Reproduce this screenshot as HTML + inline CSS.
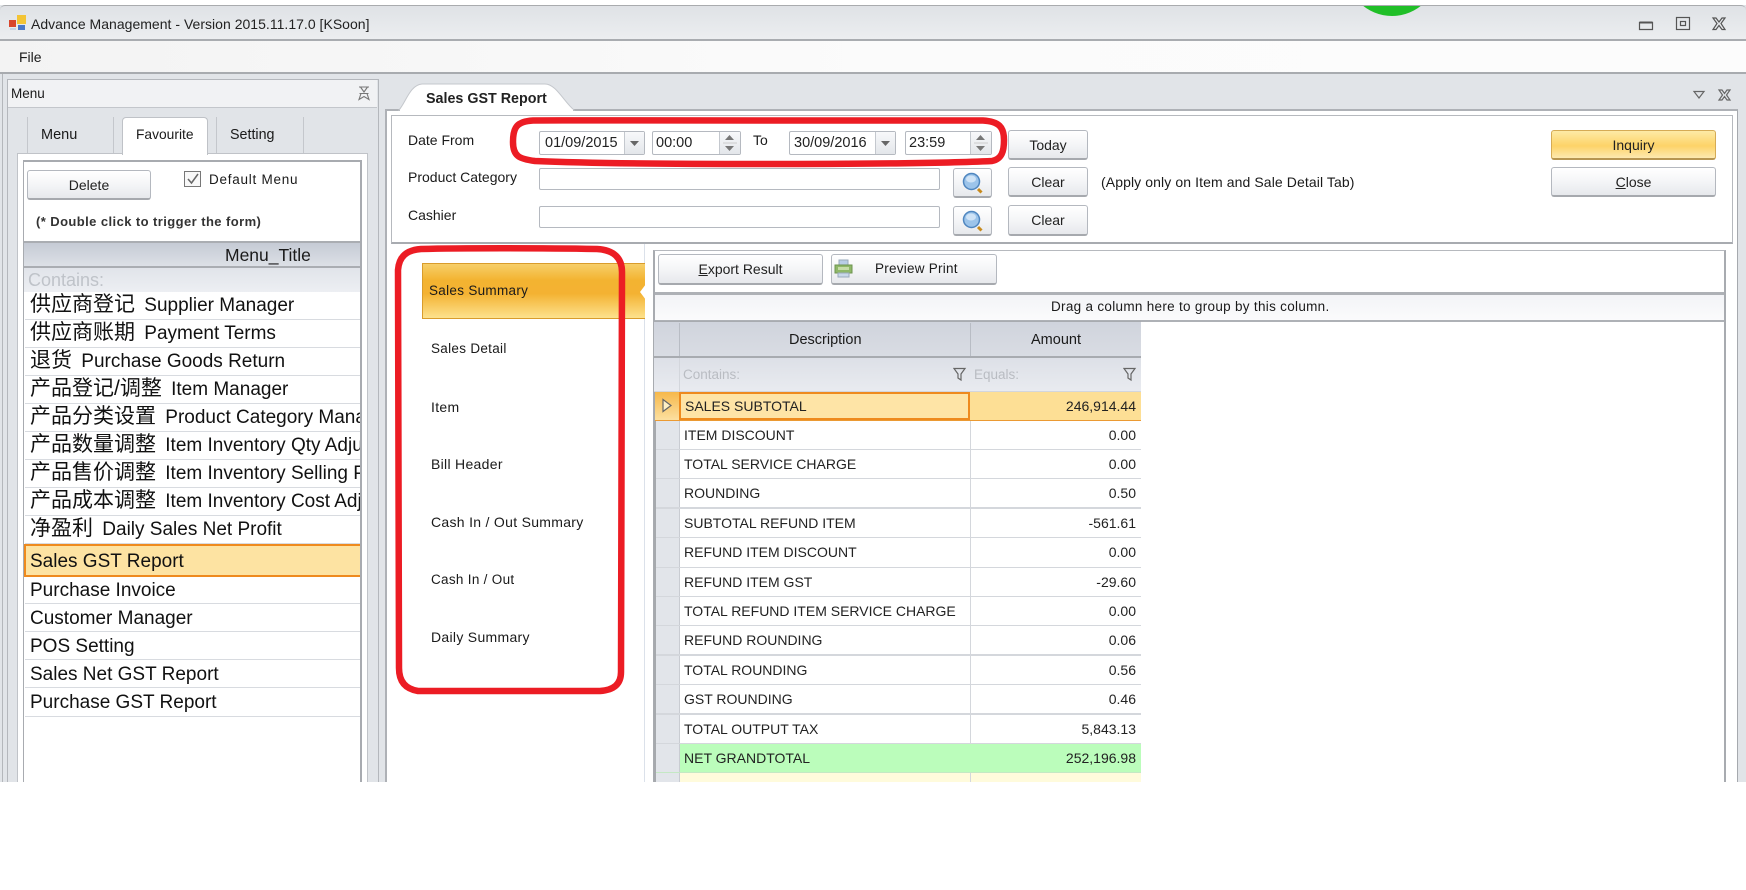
<!DOCTYPE html>
<html><head><meta charset="utf-8"><style>
html,body{margin:0;padding:0;background:#fff}
#p{position:relative;width:1746px;height:890px;overflow:hidden;background:#fff;font-family:"Liberation Sans","Noto Sans CJK SC",sans-serif;color:#1a1a1a;filter:blur(.3px)}
#p div,#p span.a,#p svg{position:absolute}
.t{position:absolute;white-space:nowrap;font-size:14px;line-height:16px}
.tb{font-size:14px;letter-spacing:.3px}
.btn{background:linear-gradient(#fff,#f3f4f6 55%,#e6e8ec);border:1px solid #b4b8bf;border-bottom:2px solid #a6a9ae;border-radius:3px;box-sizing:border-box;text-align:center;font-size:14px;color:#222}
.in{background:#fff;border:1px solid #b5b9c0;border-radius:2px;box-sizing:border-box}
.sp{background:linear-gradient(#f7f8fa,#e3e6ea);border-left:1px solid #c4c8ce;box-sizing:border-box}
.r{position:absolute;left:25px;width:335px;white-space:nowrap;overflow:hidden;font-size:19px;border-bottom:1px solid #d8dbe0;box-sizing:border-box;padding-left:5px;color:#111;background:#fff}
.r b{font-weight:400;font-size:21px;margin-right:4px}
.g{position:absolute;left:656px;width:485px;box-sizing:border-box;border-bottom:1px solid #d4d7dc;background:#fff;font-size:14px;color:#222}
.g i{position:absolute;left:0;top:0;bottom:0;width:23px;background:#e2e5ea;border-right:1px solid #c9ccd2;font-style:normal}
.g u{position:absolute;left:28px;text-decoration:none;white-space:nowrap}
.g s{position:absolute;right:5px;text-decoration:none;white-space:nowrap}
.g em{position:absolute;left:314px;top:0;bottom:0;width:1px;background:#d4d7dc}
</style></head><body><div id="p">

<!-- app background -->
<div style="left:0;top:5px;width:1746px;height:777px;background:#e1e4e8"></div>
<div style="left:2px;top:74px;width:1px;height:708px;background:#b4b7bb"></div>
<!-- title bar -->
<div style="left:0;top:5px;width:1746px;height:36px;background:linear-gradient(#dfe2e6,#eceef0);border-top:1px solid #a9abae;border-bottom:2px solid #a9acb0;box-sizing:border-box;border-radius:5px 5px 0 0;overflow:hidden">
 <div style="left:1346px;top:-82px;width:92px;height:92px;border-radius:50%;background:#20bf28"></div>
</div>
<svg style="left:9px;top:14px" width="18" height="17" viewBox="0 0 18 17"><rect x="0" y="6" width="7" height="7" fill="#d8452c"/><rect x="8" y="1" width="9" height="9" fill="#f3c435"/><rect x="9" y="11" width="7" height="5" fill="#4a78c8"/><rect x="1" y="14" width="6" height="2" fill="#c7d2e4"/></svg>
<span class="t" style="left:31px;top:16px;font-size:14px;color:#222;letter-spacing:.02px">Advance Management - Version 2015.11.17.0 [KSoon]</span>
<!-- window buttons -->
<svg style="left:1635px;top:14px" width="100" height="20" viewBox="0 0 100 20" fill="none" stroke="#555" stroke-width="1.2"><path d="M4.500 8.500h13v7h-13z"/><path d="M4.500 8.500h13" stroke-width="2"/><rect x="41.500" y="3.500" width="13" height="12"/><rect x="45.500" y="7.500" width="5" height="4"/><path d="M78 4l3 0 3 4 3-4 3 0-4 5.500 4 6-3 0-3-4-3 4-3 0 4-6z"/></svg>
<!-- menubar -->
<div style="left:0;top:41px;width:1746px;height:33px;background:linear-gradient(90deg,#f3f3f3,#fbfbfb 50%,#fcfcfc);border-bottom:2px solid #a8abaf;box-sizing:border-box"></div>
<span class="t" style="left:19px;top:49px;font-size:14px">File</span>

<!-- LEFT PANEL -->
<div style="left:7px;top:79px;width:372px;height:703px;background:#e1e4e8;border:1px solid #b4b7bc;box-sizing:border-box;border-bottom:0"></div>
<div style="left:8px;top:80px;width:369px;height:27px;background:#f1f2f4;border-bottom:1px solid #c3c6cb"></div>
<span class="t" style="left:11px;top:86px;font-size:13.500px">Menu</span>
<svg style="left:357px;top:85px" width="14" height="17" viewBox="0 0 14 17" fill="none" stroke="#777" stroke-width="1.100"><path d="M2 2h10M3.500 2l3.500 5 3.500-5M2.500 8.500h9M4 8.500l-2 6 5-3 5 3-2-6"/></svg>
<!-- tabs -->
<div style="left:27px;top:117px;width:87px;height:36px;border-left:1px solid #c4c7cc;border-right:1px solid #c4c7cc;box-sizing:border-box"></div>
<div style="left:216px;top:117px;width:88px;height:36px;border-left:1px solid #c4c7cc;border-right:1px solid #c4c7cc;box-sizing:border-box"></div>
<div style="left:17px;top:153px;width:351px;height:629px;background:#fff;border:1px solid #c0c3c8;box-sizing:border-box;border-bottom:0"></div>
<div style="left:122px;top:117px;width:86px;height:38px;background:#fff;border:1px solid #bfc2c7;border-bottom:0;border-radius:4px 4px 0 0;box-sizing:border-box"></div>
<span class="t" style="left:41px;top:127px;font-size:14.500px">Menu</span>
<span class="t" style="left:136px;top:127px;font-size:13.800px">Favourite</span>
<span class="t" style="left:230px;top:127px;font-size:14.300px">Setting</span>
<!-- inner -->
<div style="left:23px;top:160px;width:339px;height:622px;background:#fff;border:1px solid #a8abb0;border-right:2px solid #a8abb0;border-top:2px solid #a8abb0;border-bottom:0;box-sizing:border-box"></div>
<div class="btn" style="left:27px;top:170px;width:124px;height:30px;line-height:29px">Delete</div>
<div style="left:184px;top:171px;width:17px;height:16px;border:1px solid #777;box-sizing:border-box;background:#f8f8f8"></div>
<svg style="left:186px;top:173px" width="14" height="13" viewBox="0 0 14 13" fill="none" stroke="#666" stroke-width="1.500"><path d="M2 6l3.500 4L12 1"/></svg>
<span class="t" style="left:209px;top:172px;font-size:13.500px;letter-spacing:.75px">Default Menu</span>
<span class="t" style="left:36px;top:214px;font-size:13px;letter-spacing:.42px;font-weight:700;color:#333">(* Double click to trigger the form)</span>
<div style="left:24px;top:241px;width:336px;height:27px;background:linear-gradient(#c6cbd5,#dde0e6);border-top:2px solid #aaadb2;border-bottom:2px solid #aaadb2;box-sizing:border-box"></div>
<span class="t" style="left:225px;top:245px;font-size:17.500px;line-height:20px">Menu_Title</span>
<div style="left:24px;top:268px;width:336px;height:24px;background:linear-gradient(#e1e4ea,#edeff3)"></div>
<span class="t" style="left:28px;top:269px;font-size:18px;line-height:22px;color:#bfc3c9">Contains:</span>

<div class="r" style="top:292px;height:28px;line-height:26px"><b>供应商登记</b> Supplier Manager</div>
<div class="r" style="top:320px;height:28px;line-height:26px"><b>供应商账期</b> Payment Terms</div>
<div class="r" style="top:348px;height:28px;line-height:26px"><b>退货</b> Purchase Goods Return</div>
<div class="r" style="top:376px;height:28px;line-height:26px"><b>产品登记/调整</b> Item Manager</div>
<div class="r" style="top:404px;height:28px;line-height:26px"><b>产品分类设置</b> Product Category Manager</div>
<div class="r" style="top:432px;height:28px;line-height:26px"><b>产品数量调整</b> Item Inventory Qty Adjust</div>
<div class="r" style="top:460px;height:28px;line-height:26px"><b>产品售价调整</b> Item Inventory Selling Price</div>
<div class="r" style="top:488px;height:28px;line-height:26px"><b>产品成本调整</b> Item Inventory Cost Adjust</div>
<div class="r" style="top:516px;height:28px;line-height:26px"><b>净盈利</b> Daily Sales Net Profit</div>
<div class="r" style="top:544px;height:33px;line-height:32px;background:#fde3a2;border:2px solid #ee8a1e;border-right:0;padding-left:4px;left:24px;width:336px">Sales GST Report</div>
<div class="r" style="top:577px;height:27px;line-height:27px">Purchase Invoice</div>
<div class="r" style="top:604px;height:28px;line-height:29px">Customer Manager</div>
<div class="r" style="top:632px;height:28px;line-height:29px">POS Setting</div>
<div class="r" style="top:660px;height:28px;line-height:29px">Sales Net GST Report</div>
<div class="r" style="top:688px;height:29px;line-height:29px">Purchase GST Report</div>

<!-- RIGHT PANEL -->
<div style="left:385px;top:109px;width:1353px;height:673px;background:#fff;border:2px solid #aeb1b6;border-right:1px solid #a6a9ae;border-bottom:0;box-sizing:border-box"></div>
<svg style="left:398px;top:82px" width="178" height="29" viewBox="0 0 178 29"><path d="M1 28C8 20 12 3 24 2H147C158 2 166 20 176 28Z" fill="#fff" stroke="#c4c7cc"/><path d="M2 28.500h173" stroke="#fff" stroke-width="2"/></svg>
<span class="t" style="left:426px;top:91px;font-size:14.300px;font-weight:700;color:#222">Sales GST Report</span>
<svg style="left:1692px;top:88px" width="46" height="14" viewBox="0 0 46 14" fill="none" stroke="#666" stroke-width="1.200"><path d="M2 3.500h10L7 10z"/><path d="M27 2l3 0 2.500 3.500 2.500-3.500 3 0-3.500 5 3.500 5-3 0-2.500-3.500-2.500 3.500-3 0 3.500-5z"/></svg>
<!-- filter panel -->
<div style="left:391px;top:115px;width:1342px;height:129px;background:#fff;border:1px solid #b6b9be;border-bottom:2px solid #a8abb0;box-sizing:border-box"></div>
<span class="t" style="left:408px;top:132px">Date From</span>
<span class="t" style="left:408px;top:169px">Product Category</span>
<span class="t" style="left:408px;top:207px">Cashier</span>

<div class="in" style="left:539px;top:131px;width:106px;height:24px;padding-left:5px;font-size:14.500px;line-height:22px;color:#222">01/09/2015<div class="sp" style="right:0;top:0;width:20px;height:22px"></div></div>
<svg style="left:629px;top:140px" width="12" height="7"><path d="M1 1h9L5.500 6z" fill="#666"/></svg>
<div class="in" style="left:652px;top:131px;width:89px;height:24px;padding-left:3px;font-size:14.500px;line-height:22px;color:#222">00:00<div class="sp" style="right:0;top:0;width:21px;height:22px"></div></div>
<svg style="left:723px;top:134px" width="14" height="18"><path d="M2 6h9L6.500 1zM2 12h9l-4.500 5z" fill="#777"/><path d="M0 9h14" stroke="#ccc"/></svg>
<span class="t" style="left:753px;top:132px">To</span>
<div class="in" style="left:789px;top:131px;width:107px;height:24px;padding-left:4px;font-size:14.500px;line-height:22px;color:#222">30/09/2016<div class="sp" style="right:0;top:0;width:20px;height:22px"></div></div>
<svg style="left:880px;top:140px" width="12" height="7"><path d="M1 1h9L5.500 6z" fill="#666"/></svg>
<div class="in" style="left:905px;top:131px;width:87px;height:24px;padding-left:3px;font-size:14.500px;line-height:22px;color:#222">23:59<div class="sp" style="right:0;top:0;width:21px;height:22px"></div></div>
<svg style="left:974px;top:134px" width="14" height="18"><path d="M2 6h9L6.500 1zM2 12h9l-4.500 5z" fill="#777"/><path d="M0 9h14" stroke="#ccc"/></svg>

<div class="btn" style="left:1008px;top:130px;width:80px;height:30px;line-height:29px">Today</div>
<div class="in" style="left:539px;top:168px;width:401px;height:22px"></div>
<div class="in" style="left:539px;top:206px;width:401px;height:22px"></div>
<div class="btn" style="left:953px;top:168px;width:39px;height:30px"></div>
<div class="btn" style="left:953px;top:206px;width:39px;height:30px"></div>
<svg style="left:961px;top:172px" width="24" height="24" viewBox="0 0 24 24"><circle cx="10.500" cy="9.500" r="8" fill="#9cc4ea" stroke="#4f86bf" stroke-width="1.500"/><ellipse cx="10" cy="7" rx="5" ry="3.500" fill="#cfe3f6"/><path d="M17 17l3.500 3.500" stroke="#c88a1c" stroke-width="3"/></svg>
<svg style="left:961px;top:210px" width="24" height="24" viewBox="0 0 24 24"><circle cx="10.500" cy="9.500" r="8" fill="#9cc4ea" stroke="#4f86bf" stroke-width="1.500"/><ellipse cx="10" cy="7" rx="5" ry="3.500" fill="#cfe3f6"/><path d="M17 17l3.500 3.500" stroke="#c88a1c" stroke-width="3"/></svg>
<div class="btn" style="left:1008px;top:167px;width:80px;height:30px;line-height:29px">Clear</div>
<div class="btn" style="left:1008px;top:205px;width:80px;height:31px;line-height:29px">Clear</div>
<span class="t" style="left:1101px;top:174px;font-size:14px;letter-spacing:.1px">(Apply only on Item and Sale Detail Tab)</span>
<div class="btn" style="left:1551px;top:130px;width:165px;height:30px;line-height:29px;background:linear-gradient(#fdeaa6,#fdd368 55%,#fde9b0);border-color:#d5ab55;border-bottom-color:#b79551">Inquiry</div>
<div class="btn" style="left:1551px;top:167px;width:165px;height:30px;line-height:29px"><span style="text-decoration:underline">C</span>lose</div>

<!-- lower area -->
<div style="left:644px;top:244px;width:1px;height:538px;background:#dbe1ea"></div>
<div style="left:422px;top:263px;width:223px;height:56px;background:linear-gradient(#f6cf6a,#f3b331 30%,#f4b232 55%,#fde28d);border:1px solid #d99c2c;border-right:0;box-sizing:border-box"></div>
<svg style="left:640px;top:284px" width="6" height="16"><path d="M6 0L0 8l6 8z" fill="#fff"/></svg>
<span class="t tb" style="left:429px;top:283px;font-size:13.500px">Sales Summary</span>
<span class="t tb" style="left:431px;top:341px;font-size:13.500px">Sales Detail</span>
<span class="t tb" style="left:431px;top:399px">Item</span>
<span class="t tb" style="left:431px;top:456px">Bill Header</span>
<span class="t tb" style="left:431px;top:514px">Cash In / Out Summary</span>
<span class="t tb" style="left:431px;top:572px;font-size:13.500px">Cash In / Out</span>
<span class="t tb" style="left:431px;top:629px">Daily Summary</span>

<!-- right subpanel -->
<div style="left:653px;top:250px;width:1073px;height:532px;background:#fff;border:1px solid #b6b9be;border-right:2px solid #a8abb0;border-left:2px solid #a8abb0;border-bottom:0;box-sizing:border-box"></div>
<div class="btn" style="left:658px;top:254px;width:165px;height:31px;line-height:29px"><span style="text-decoration:underline">E</span>xport Result</div>
<div class="btn" style="left:831px;top:254px;width:166px;height:31px"></div>
<span class="t" style="left:875px;top:261px;font-size:13.500px;letter-spacing:.25px">Preview Print</span>
<svg style="left:834px;top:259px" width="20" height="20" viewBox="0 0 20 20"><rect x="5" y="1" width="9" height="5" fill="#b8cde6" stroke="#9ab"/><rect x="1" y="6" width="17" height="8" fill="#8fb868" stroke="#6e9450"/><rect x="4" y="8" width="11" height="3" fill="#c6dca8"/><rect x="4" y="14" width="11" height="4" fill="#c9d8ea" stroke="#9ab"/></svg>
<div style="left:655px;top:292px;width:1069px;height:30px;background:linear-gradient(#f3f4f7,#fbfbfc);border-top:3px solid #aeb1b6;border-bottom:2px solid #aeb1b6;box-sizing:border-box"></div>
<span class="t" style="left:1051px;top:299px;font-size:13.500px;letter-spacing:.3px">Drag a column here to group by this column.</span>
<!-- grid -->
<div style="left:654px;top:321px;width:487px;height:37px;background:linear-gradient(#d0d4dd,#d9dce3);border-top:1px solid #a8abb0;border-bottom:2px solid #a8abb0;box-sizing:border-box"></div>
<div style="left:679px;top:323px;width:1px;height:33px;background:#b8bcc4"></div>
<div style="left:970px;top:323px;width:1px;height:33px;background:#b8bcc4"></div>
<span class="t" style="left:789px;top:332px;font-size:14.500px">Description</span>
<span class="t" style="left:1031px;top:332px;font-size:14.500px">Amount</span>
<div style="left:654px;top:358px;width:487px;height:34px;background:linear-gradient(#dde0e7,#e9ebf0);border-bottom:1px solid #d3d6dc;box-sizing:border-box"></div>
<div style="left:679px;top:358px;width:1px;height:34px;background:#d3d6dc"></div>
<span class="t" style="left:683px;top:367px;color:#b9bcc2;font-size:13.500px">Contains:</span>
<span class="t" style="left:974px;top:367px;color:#b9bcc2;font-size:13.500px">Equals:</span>
<svg style="left:953px;top:367px" width="14" height="15" viewBox="0 0 14 15" fill="none" stroke="#666" stroke-width="1.200"><path d="M1 1.500h11L8 7v6l-3-2V7z"/></svg>
<svg style="left:1123px;top:367px" width="14" height="15" viewBox="0 0 14 15" fill="none" stroke="#666" stroke-width="1.200"><path d="M1 1.500h11L8 7v6l-3-2V7z"/></svg>

<div style="left:654px;top:392px;width:3px;height:390px;background:#a6a9ad"></div>
<div class="g" style="top:392px;height:29px;line-height:28px;background:#fddf95;border-bottom:1px solid #eb9a33;left:655px;width:486px"><i style="background:linear-gradient(#f6b84a,#fce0a0);width:24px;border:0"></i><s>246,914.44</s><div style="left:24px;top:0;width:291px;height:28px;border:2px solid #ee8a1e;box-sizing:border-box;background:#fee4a6"></div></div>
<svg style="left:661px;top:398px" width="12" height="15" viewBox="0 0 12 15"><path d="M2 1.500l8 6-8 6z" fill="#fff0c4" stroke="#666" stroke-width="1.200"/></svg>
<div class="t" style="left:685px;top:398px;font-size:14px;color:#222">SALES SUBTOTAL</div>

<div class="g" style="top:421px;height:29px;line-height:28px"><i></i><u>ITEM DISCOUNT</u><em></em><s>0.00</s></div>
<div class="g" style="top:450px;height:29px;line-height:28px"><i></i><u>TOTAL SERVICE CHARGE</u><em></em><s>0.00</s></div>
<div class="g" style="top:479px;height:30px;line-height:29px;border-bottom:2px solid #d4d7dc"><i></i><u>ROUNDING</u><em></em><s>0.50</s></div>
<div class="g" style="top:509px;height:29px;line-height:28px"><i></i><u>SUBTOTAL REFUND ITEM</u><em></em><s>-561.61</s></div>
<div class="g" style="top:538px;height:30px;line-height:29px"><i></i><u>REFUND ITEM DISCOUNT</u><em></em><s>0.00</s></div>
<div class="g" style="top:568px;height:29px;line-height:28px"><i></i><u>REFUND ITEM GST</u><em></em><s>-29.60</s></div>
<div class="g" style="top:597px;height:29px;line-height:28px"><i></i><u>TOTAL REFUND ITEM SERVICE CHARGE</u><em></em><s>0.00</s></div>
<div class="g" style="top:626px;height:30px;line-height:29px;border-bottom:2px solid #d4d7dc"><i></i><u>REFUND ROUNDING</u><em></em><s>0.06</s></div>
<div class="g" style="top:656px;height:29px;line-height:28px"><i></i><u>TOTAL ROUNDING</u><em></em><s>0.56</s></div>
<div class="g" style="top:685px;height:30px;line-height:29px;border-bottom:2px solid #d4d7dc"><i></i><u>GST ROUNDING</u><em></em><s>0.46</s></div>
<div class="g" style="top:715px;height:29px;line-height:28px"><i></i><u>TOTAL OUTPUT TAX</u><em></em><s>5,843.13</s></div>
<div class="g" style="top:744px;height:29px;line-height:28px;background:#bbfdbb;border-bottom:1px solid #c4e8c4"><i></i><u>NET GRANDTOTAL</u><em style="background:#bbfdbb"></em><s>252,196.98</s></div>
<div class="g" style="top:773px;height:9px;background:#fffbdc;border:0"><i></i><em></em></div>

<!-- red annotations -->
<svg style="left:0;top:0;z-index:5" width="1746" height="890" fill="none" stroke="#ec1c24" stroke-width="6.500">
<path d="M533 120.500C600 120 660 120.500 760 120.500C850 120.500 950 120 983 120.500C999 121.500 1004 127 1004 140C1004 151 1002 159 992 161C950 163 860 164 760 164C670 164 580 163 535 161C519 159 513 156 513 142C513 127 517 121.500 533 120.500Z"/>
<path d="M421 249C460 248 540 248 597 249C614 250 622 258 622 272L621 672C621 684 614 690 600 691C540 691 470 691 418 691C406 689 399 682 399 668L398 270C399 256 407 250 421 249Z"/>
</svg>
</div></body></html>
